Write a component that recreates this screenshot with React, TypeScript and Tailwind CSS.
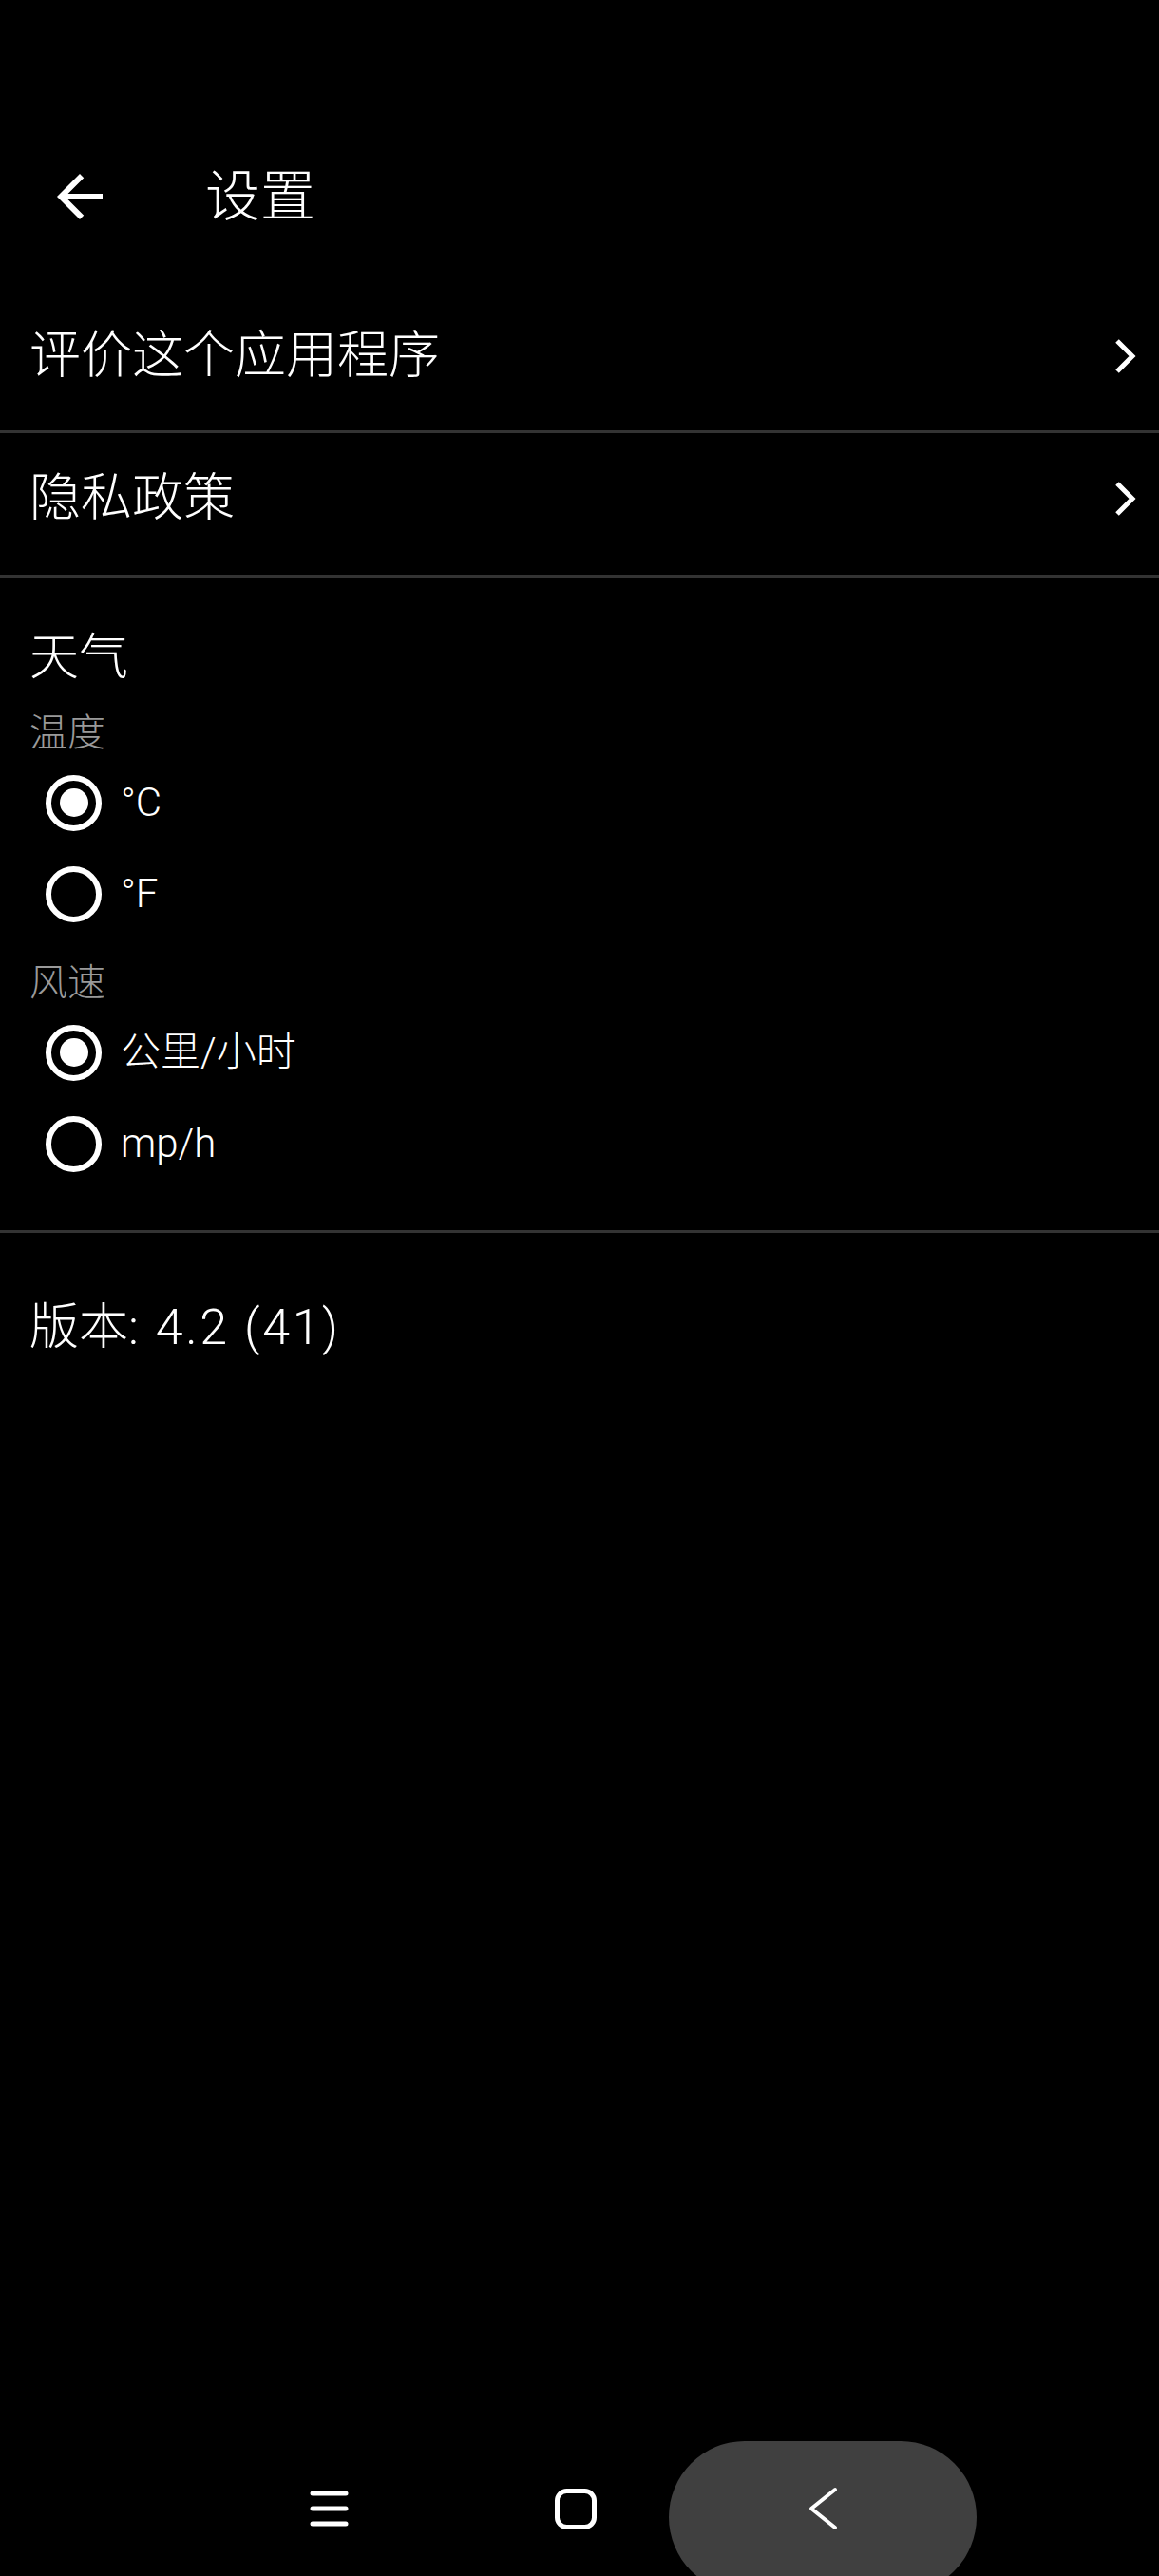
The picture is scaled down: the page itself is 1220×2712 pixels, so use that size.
import React, { useState } from 'react';

const font = "font-['Roboto','Noto_Sans_CJK_SC',sans-serif]";

function BackArrow() {
  return (
    <svg width="72" height="72" viewBox="0 0 24 24" className="shrink-0">
      <path fill="#fff" d="M20 11H7.83l5.59-5.59L12 4l-8 8 8 8 1.41-1.41L7.83 13H20v-2z" />
    </svg>
  );
}

function ChevronRight() {
  return (
    <svg width="26" height="40" viewBox="0 0 26 40" className="shrink-0">
      <polyline points="4,4 20,20 4,36" fill="none" stroke="#fff" strokeWidth="5" />
    </svg>
  );
}

function Divider() {
  return <div className="h-[3px] w-full bg-[#333333]" />;
}

function Radio({ checked }: { checked: boolean }) {
  return (
    <div className="flex h-[59px] w-[59px] shrink-0 items-center justify-center rounded-full border-[6px] border-white">
      {checked && <div className="h-[30px] w-[30px] rounded-full bg-white" />}
    </div>
  );
}

interface OptionProps {
  label: string;
  checked: boolean;
  onSelect: () => void;
}

function Option({ label, checked, onSelect }: OptionProps) {
  return (
    <button onClick={onSelect} className="flex h-[96px] w-full items-center pl-[48px] text-left">
      <Radio checked={checked} />
      <span className="ml-[20px] text-[42px] leading-none font-light text-white">{label}</span>
    </button>
  );
}

function LinkRow({ label, className }: { label: string; className: string }) {
  return (
    <div className={`flex items-center justify-between pl-[31px] pr-[22px] ${className}`}>
      <span className="text-[54px] leading-none font-light text-white">{label}</span>
      <ChevronRight />
    </div>
  );
}

export default function App() {
  const [temp, setTemp] = useState('c');
  const [wind, setWind] = useState('kmh');

  return (
    <div className={`flex min-h-[2712px] w-[1220px] flex-col bg-black ${font}`}>
      <header className="mt-[171px] flex items-center pl-[48px]">
        <BackArrow />
        <h1 className="ml-[96px] text-[58px] leading-none font-light text-white">设置</h1>
      </header>

      {/* rows */}
      <LinkRow label="评价这个应用程序" className="pt-[53px] pb-[51px] mt-[52px]" />
      <Divider />
      <LinkRow label="隐私政策" className="pt-[42px] pb-[53px]" />
      <Divider />

      <section className="pl-[31px] pt-[59px]">
        <h2 className="text-[52px] leading-none font-light text-white">天气</h2>
        <p className="mt-[33px] text-[40px] leading-none font-light text-[#9a9a9a]">温度</p>
      </section>
      <div className="mt-[5px]">
        <Option label="°C" checked={temp === 'c'} onSelect={() => setTemp('c')} />
        <Option label="°F" checked={temp === 'f'} onSelect={() => setTemp('f')} />
      </div>
      <p className="mt-[26px] pl-[31px] text-[40px] leading-none font-light text-[#9a9a9a]">风速</p>
      <div className="mt-[5px] mb-[43px]">
        <Option label="公里/小时" checked={wind === 'kmh'} onSelect={() => setWind('kmh')} />
        <Option label="mp/h" checked={wind === 'mph'} onSelect={() => setWind('mph')} />
      </div>
      <Divider />

      <p className="mt-[74px] pl-[31px] text-[52px] leading-none font-light text-white">
        版本<span className="tracking-[0.05em]">: 4.2 (41)</span>
      </p>

      <div className="flex-1" />

      {/* system nav bar */}
      <nav className="flex h-[142px] items-center overflow-hidden pl-[326px]">
        <svg width="41" height="38" viewBox="0 0 41 38" className="shrink-0">
          <g stroke="#fff" strokeWidth="5" strokeLinecap="round">
            <line x1="3" y1="3" x2="38" y2="3" />
            <line x1="3" y1="19" x2="38" y2="19" />
            <line x1="3" y1="35" x2="38" y2="35" />
          </g>
        </svg>
        <svg width="44" height="43" viewBox="0 0 44 43" className="ml-[217px] shrink-0">
          <rect x="2.5" y="2.5" width="39" height="38" rx="10" fill="none" stroke="#fff" strokeWidth="5" />
        </svg>
        <div className="ml-[76px] flex h-[160px] w-[324px] shrink-0 items-center justify-center self-start rounded-[80px] bg-[#404040]">
          <svg width="31" height="46" viewBox="0 0 31 46" className="-mt-[18px]">
            <polyline points="28,3 3,23 28,43" fill="none" stroke="#fff" strokeWidth="4" strokeLinecap="round" strokeLinejoin="round" />
          </svg>
        </div>
      </nav>
    </div>
  );
}
